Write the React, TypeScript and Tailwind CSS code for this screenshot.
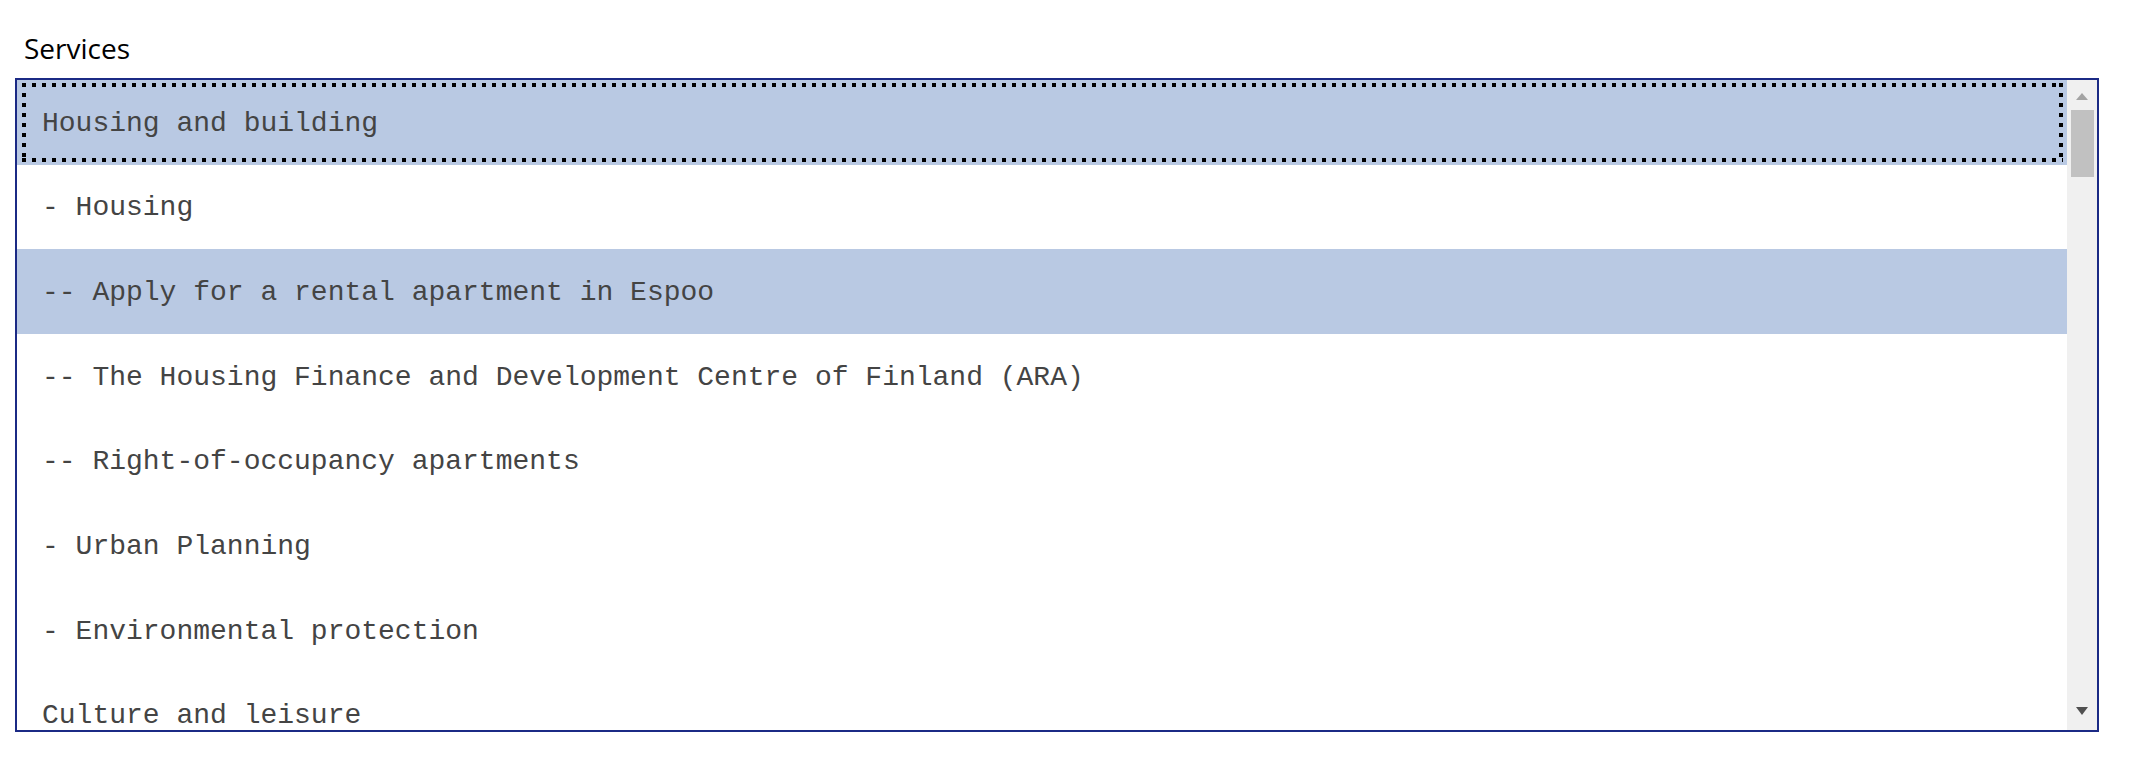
import React from "react";

const items = [
  "Housing and building",
  "- Housing",
  "-- Apply for a rental apartment in Espoo",
  "-- The Housing Finance and Development Centre of Finland (ARA)",
  "-- Right-of-occupancy apartments",
  "- Urban Planning",
  "- Environmental protection",
  "Culture and leisure",
];

const selected = [0, 2];

const FocusRing = () => (
  <>
    <div className="absolute left-[5px] right-[4px] top-[3px] h-[4px] bg-[repeating-linear-gradient(90deg,#000_0_4px,transparent_4px_10px)]" />
    <div className="absolute left-[5px] right-[4px] bottom-[3px] h-[4px] bg-[repeating-linear-gradient(90deg,#000_0_4px,transparent_4px_10px)]" />
    <div className="absolute left-[5px] top-[3px] bottom-[3px] w-[4px] bg-[repeating-linear-gradient(180deg,#000_0_4px,transparent_4px_10px)]" />
    <div className="absolute right-[4px] top-[3px] bottom-[3px] w-[4px] bg-[repeating-linear-gradient(180deg,#000_0_4px,transparent_4px_10px)]" />
  </>
);

export default function App() {
  return (
    <div className="min-h-[780px] w-full bg-white pt-[29px] pl-[15px]">
      <div className="pl-[9px] text-[28px] leading-[38px] text-black font-['Open_Sans','Noto_Sans',sans-serif]">
        Services
      </div>

      <div className="mt-[11px] flex h-[654px] w-[2084px] border-2 border-[#1b2a85]">
        <div className="flex-1 overflow-hidden font-['Liberation_Mono','Courier_New',monospace] text-[28px] text-[#444]">
          {items.map((item, i) => (
            <div
              key={item}
              className={`relative flex h-[84.67px] items-center whitespace-pre pl-[25px] pt-[3px] ${
                selected.includes(i) ? "bg-[#b9c9e3]" : "bg-white"
              }`}
            >
              {i === 0 && <FocusRing />}
              {item}
            </div>
          ))}
        </div>

        {/* scrollbar */}
        <div className="flex w-[30px] flex-col bg-[#f0f0f0]">
          <div className="flex h-[30px] justify-center pt-[13px]">
            <svg width="12" height="7" viewBox="0 0 12 7">
              <polygon points="6,0 12,7 0,7" fill="#a3a3a3" />
            </svg>
          </div>
          <div className="flex-1 pl-[4px]">
            <div className="h-[67px] w-[23px] bg-[#c1c1c1]" />
          </div>
          <div className="flex h-[30px] justify-center pt-[7px]">
            <svg width="12" height="8" viewBox="0 0 12 8">
              <polygon points="0,0 12,0 6,8" fill="#505050" />
            </svg>
          </div>
        </div>
      </div>
    </div>
  );
}
